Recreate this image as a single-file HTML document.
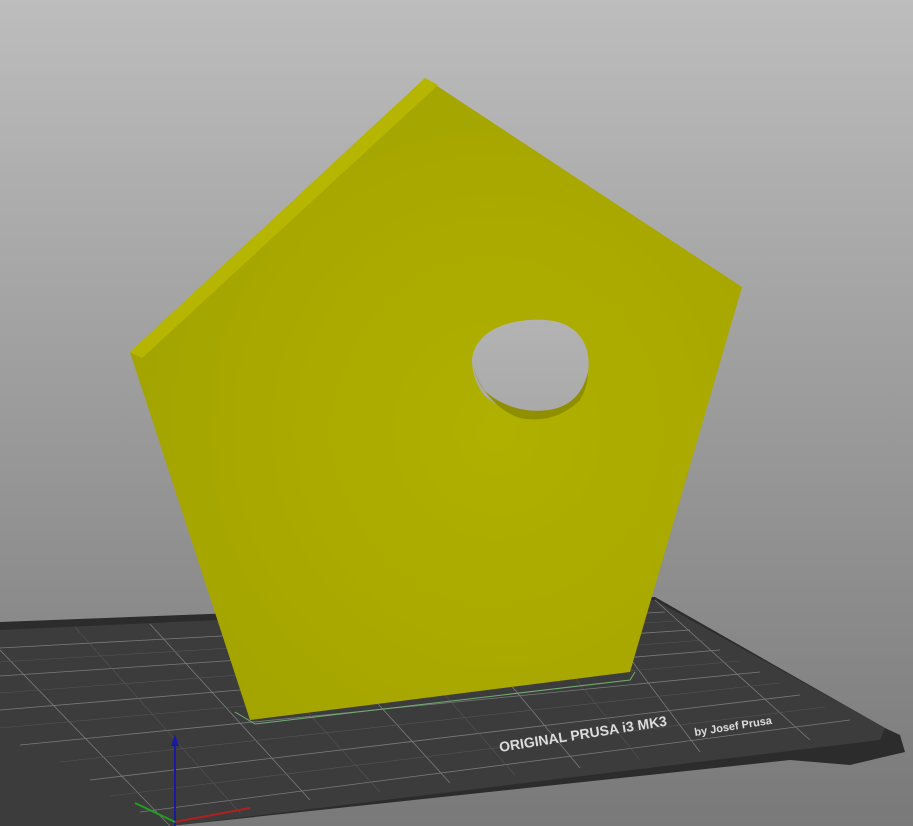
<!DOCTYPE html><html><head><style>html,body{margin:0;padding:0;width:913px;height:826px;overflow:hidden}</style></head><body>
<svg width="913" height="826" viewBox="0 0 913 826" xmlns="http://www.w3.org/2000/svg">
<defs>
<linearGradient id="bg" x1="0" y1="0" x2="0" y2="1"><stop offset="0" stop-color="#bdbdbd"/><stop offset="1" stop-color="#797979"/></linearGradient>
<radialGradient id="obj" cx="0.6" cy="0.55" r="0.6"><stop offset="0" stop-color="#b0b000"/><stop offset="1" stop-color="#a4a400"/></radialGradient>
<linearGradient id="hole" x1="0" y1="0" x2="0" y2="1"><stop offset="0" stop-color="#b3b3b3"/><stop offset="1" stop-color="#a9a9a9"/></linearGradient>
</defs>
<rect width="913" height="826" fill="url(#bg)"/>
<polygon points="0,622 655,597 885,728 900,735 905,752 850,765 790,760 170,826 0,826" fill="#2c2c2c"/>
<polygon points="0,630 655,600 885,728 880,740 170,826 0,826" fill="#3c3c3c"/>
<g stroke="#8a8a8a" stroke-width="0.8" opacity="0.8">
<line x1="0" y1="648" x2="665" y2="612"/><line x1="0" y1="676" x2="690" y2="630"/><line x1="0" y1="710" x2="720" y2="650"/><line x1="20" y1="745" x2="760" y2="672"/><line x1="90" y1="780" x2="800" y2="695"/><line x1="140" y1="812" x2="850" y2="720"/>
<line x1="0" y1="650" x2="170" y2="826"/><line x1="150" y1="624" x2="310" y2="800"/><line x1="300" y1="618" x2="450" y2="783"/><line x1="450" y1="612" x2="580" y2="768"/><line x1="590" y1="605" x2="700" y2="752"/><line x1="655" y1="600" x2="810" y2="740"/>
</g>
<g stroke="#555" stroke-width="0.6">
<line x1="0" y1="662" x2="678" y2="621"/><line x1="0" y1="693" x2="705" y2="640"/><line x1="0" y1="728" x2="740" y2="661"/><line x1="60" y1="762" x2="780" y2="683"/><line x1="110" y1="796" x2="825" y2="707"/>
<line x1="75" y1="627" x2="240" y2="813"/><line x1="225" y1="621" x2="380" y2="792"/><line x1="375" y1="615" x2="515" y2="775"/><line x1="520" y1="608" x2="640" y2="760"/>
</g>
<text x="500" y="752" fill="#dddddd" font-family="Liberation Sans, sans-serif" font-size="14" font-weight="bold" transform="rotate(-9 500 752)">ORIGINAL PRUSA i3 MK3</text>
<text x="695" y="736" fill="#dddddd" font-family="Liberation Sans, sans-serif" font-size="11" font-weight="bold" transform="rotate(-9 695 736)">by Josef Prusa</text>
<polyline points="235,712 255,724 630,680 635,672" fill="none" stroke="#6fb06f" stroke-width="1"/>
<polygon points="130,352 425,78 742,287 630,672 250,720" fill="url(#obj)"/>
<polygon points="130,352 425,78 438,85 142,358" fill="#b6b600"/>
<path d="M472,360 C475,330 510,318 545,320 C578,322 592,345 588,372 C585,395 568,408 548,412 C522,416 500,410 484,395 C476,385 472,372 472,360Z" fill="url(#hole)"/>
<path d="M472,362 C478,390 500,412 520,418 C540,422 562,418 580,400 C586,390 588,380 588,372 C582,398 565,408 548,410 C520,414 496,402 484,390 C478,382 474,372 472,362Z" fill="#8f8f00"/>
<line x1="175" y1="826" x2="175" y2="740" stroke="#1a1aa0" stroke-width="2"/>
<polygon points="171,746 175,734 179,746" fill="#1a1aa0"/>
<line x1="175" y1="822" x2="250" y2="808" stroke="#b02020" stroke-width="2"/>
<line x1="175" y1="822" x2="135" y2="803" stroke="#20a020" stroke-width="2"/>
</svg>
</body></html>
